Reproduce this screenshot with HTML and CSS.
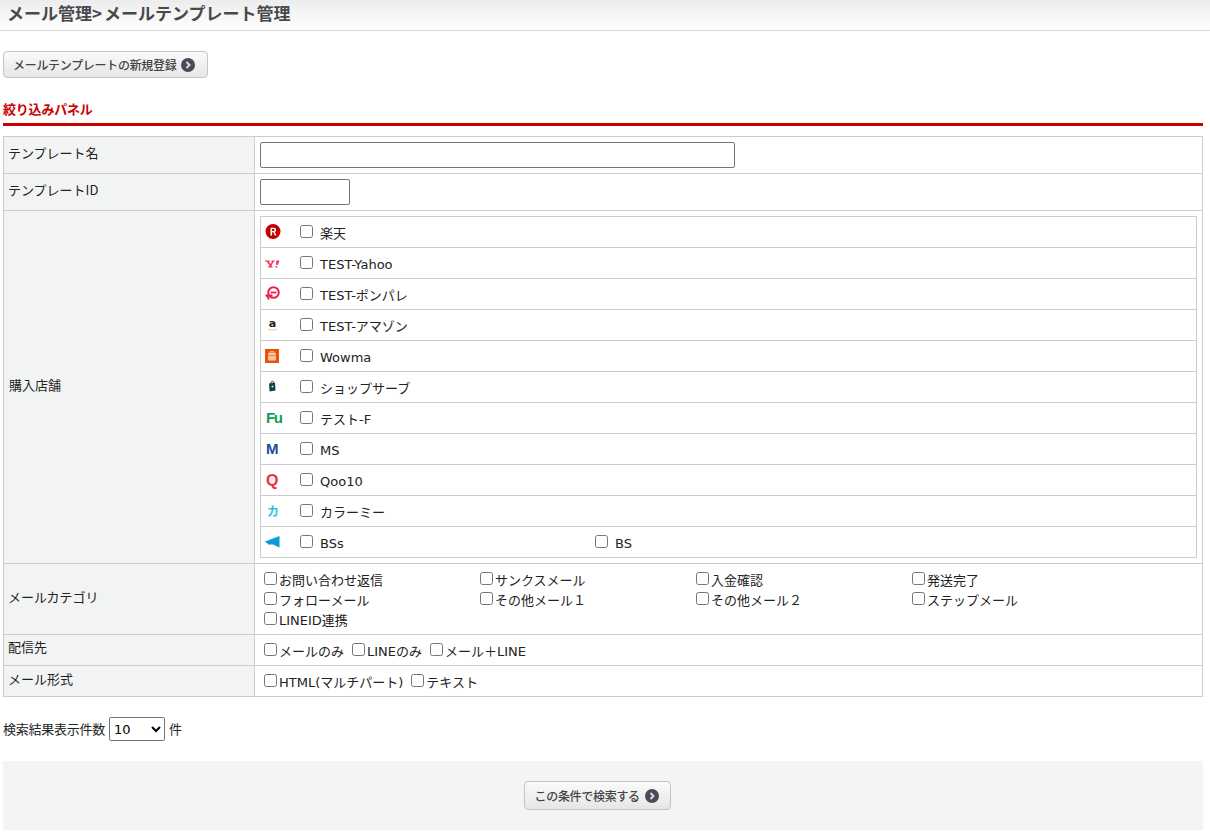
FILE: index.html
```html
<!DOCTYPE html>
<html lang="ja">
<head>
<meta charset="utf-8">
<title>メールテンプレート管理</title>
<link rel="stylesheet" href="styles.css">
</head>
<body>
<h1 class="page-title">メール管理&gt; メールテンプレート管理</h1>
<main class="content">
  <a class="btn btn-new">メールテンプレートの新規登録<svg class="arrow" viewBox="0 0 14 14"><circle cx="7" cy="7" r="7" fill="#4a4a58"/><path d="M5.5 4l3 3-3 3" fill="none" stroke="#ddd" stroke-width="2"/></svg></a>
  <h2 class="panel-title">絞り込みパネル</h2>
  <div class="form-table">
    <div class="row row-name">
      <div class="label">テンプレート名</div>
      <div class="value"><input class="text-long" type="text"></div>
    </div>
    <div class="row row-name">
      <div class="label">テンプレートID</div>
      <div class="value"><input class="text-short" type="text"></div>
    </div>
    <div class="row">
      <div class="label label-center label-shops">購入店舗</div>
      <div class="value value-shops">
        <div class="shops">
          <div class="shop"><span class="shop-icon"><svg viewBox="0 0 16 16"><circle cx="8" cy="7.500" r="7.500" fill="#bf0000"/><path fill-rule="evenodd" d="M5.500 11.500V3.800h3.200c1.500 0 2.400.8 2.400 2.200 0 1-.5 1.700-1.300 2l1.600 3.500H9.800L8.400 8.300H7.100v3.200zM7.100 5.100v2h1.400c.7 0 1-.4 1-1s-.3-1-1-1z" fill="#fff"/></svg></span><label class="shop-item"><input type="checkbox"><span>楽天</span></label></div>
          <div class="shop"><span class="shop-icon"><svg viewBox="0 0 16 16"><path d="M0 5.500h4.700v1H4L5.500 9 7 6.500h-.7v-1h3.400v1h-.8L6.700 10v1.500h1v1H3.200v-1h1.100V10L1.600 6.500H0zM11.200 5.500h3.300L12.700 10h-1.500zM10.500 11h1.700v1.500h-1.700z" fill="#f5325c"/></svg></span><label class="shop-item"><input type="checkbox"><span>TEST-Yahoo</span></label></div>
          <div class="shop"><span class="shop-icon"><svg viewBox="0 0 16 16"><circle cx="8.500" cy="6.500" r="5.300" fill="none" stroke="#e8224f" stroke-width="2"/><path d="M5.500 6.500h6" stroke="#e8224f" stroke-width="1.800"/><path d="M.5 9.500h7M2 9.500l2 4" stroke="#e8224f" stroke-width="1.800" fill="none"/></svg></span><label class="shop-item"><input type="checkbox"><span>TEST-ポンパレ</span></label></div>
          <div class="shop"><span class="shop-icon"><svg viewBox="0 0 16 16"><text x="7.500" y="10" text-anchor="middle" class="icon-a">a</text><path d="M3 12c3 1.500 6 1.500 9 0" stroke="#f2c48a" fill="none"/></svg></span><label class="shop-item"><input type="checkbox"><span>TEST-アマゾン</span></label></div>
          <div class="shop"><span class="shop-icon"><svg viewBox="0 0 16 16"><rect x="0" y="1" width="14" height="14" fill="#ea5504"/><rect x="3" y="5" width="8" height="7.500" rx="1" fill="#f6c6a8"/><path d="M5 5V3.800h4V5" fill="none" stroke="#f6c6a8"/><path d="M3 7.500h8" stroke="#ea5504" stroke-opacity=".6"/></svg></span><label class="shop-item"><input type="checkbox"><span>Wowma</span></label></div>
          <div class="shop"><span class="shop-icon"><svg viewBox="0 0 16 16"><path d="M4 4.500l6-1 .5 8-6 1z" fill="#12404a"/><path d="M6 4.500c0-3 2.500-3 2.500-.500" stroke="#12404a" fill="none"/><circle cx="7.500" cy="7.500" r="1" fill="#cfe0e0"/></svg></span><label class="shop-item"><input type="checkbox"><span>ショップサーブ</span></label></div>
          <div class="shop"><span class="shop-icon icon-fu">Fu</span><label class="shop-item"><input type="checkbox"><span>テスト-F</span></label></div>
          <div class="shop"><span class="shop-icon icon-m">M</span><label class="shop-item"><input type="checkbox"><span>MS</span></label></div>
          <div class="shop"><span class="shop-icon icon-q">Q</span><label class="shop-item"><input type="checkbox"><span>Qoo10</span></label></div>
          <div class="shop"><span class="shop-icon icon-ka">カ</span><label class="shop-item"><input type="checkbox"><span>カラーミー</span></label></div>
          <div class="shop"><span class="shop-icon"><svg viewBox="0 0 16 16"><path d="M0 7.500L14.500 2v11.500L8 10.500H3.500z" fill="#0e9bd8"/></svg></span><label class="shop-item shop-item-wide"><input type="checkbox"><span>BSs</span></label><label class="shop-item"><input type="checkbox"><span>BS</span></label></div>
        </div>
      </div>
    </div>
    <div class="row">
      <div class="label label-center label-cats">メールカテゴリ</div>
      <div class="value value-cats">
        <label class="cat"><input type="checkbox"><span>お問い合わせ返信</span></label>
        <label class="cat"><input type="checkbox"><span>サンクスメール</span></label>
        <label class="cat"><input type="checkbox"><span>入金確認</span></label>
        <label class="cat"><input type="checkbox"><span>発送完了</span></label>
        <label class="cat"><input type="checkbox"><span>フォローメール</span></label>
        <label class="cat"><input type="checkbox"><span>その他メール１</span></label>
        <label class="cat"><input type="checkbox"><span>その他メール２</span></label>
        <label class="cat"><input type="checkbox"><span>ステップメール</span></label>
        <label class="cat"><input type="checkbox"><span>LINEID連携</span></label>
      </div>
    </div>
    <div class="row row-small">
      <div class="label">配信先</div>
      <div class="value value-inline">
        <label class="cat"><input type="checkbox"><span>メールのみ</span></label>
        <label class="cat"><input type="checkbox"><span>LINEのみ</span></label>
        <label class="cat"><input type="checkbox"><span>メール＋LINE</span></label>
      </div>
    </div>
    <div class="row row-small">
      <div class="label">メール形式</div>
      <div class="value value-inline">
        <label class="cat"><input type="checkbox"><span>HTML(マルチパート)</span></label>
        <label class="cat"><input type="checkbox"><span>テキスト</span></label>
      </div>
    </div>
  </div>
  <div class="per-page"><span class="per-text">検索結果表示件数</span><select class="per-select"><option>10</option></select><span class="per-unit">件</span></div>
  <div class="search-bar">
    <a class="btn btn-search">この条件で検索する<svg class="arrow" viewBox="0 0 14 14"><circle cx="7" cy="7" r="7" fill="#4a4a58"/><path d="M5.500 4l3 3-3 3" fill="none" stroke="#ddd" stroke-width="2"/></svg></a>
  </div>
</main>
</body>
</html>
```
FILE: styles.css
```css
* { box-sizing: border-box; }
html, body { margin: 0; padding: 0; }
body {
  font-family: "DejaVu Sans", "Noto Sans CJK JP", sans-serif;
  font-size: 13px;
  color: #222;
  background: #fff;
  overflow: hidden;
  height: 832px;
}
.page-title {
  margin: 0;
  height: 31px;
  padding: 0 0 0 7px;
  font-family: "Noto Sans CJK JP", sans-serif;
  font-size: 17px;
  font-weight: 700;
  line-height: 26px;
  color: #48484f;
  background: linear-gradient(#ececec, #fff);
  border-bottom: 1px solid #d9d9de;
  word-spacing: -2px;
}
.content { padding: 20px 7px 0 3px; }
.btn {
  display: flex;
  align-items: center;
  gap: 5px;
  height: 27px;
  padding: 0 0 0 9px;
  font-family: "Noto Sans CJK JP", sans-serif;
  font-size: 12px;
  font-weight: 500;
  letter-spacing: -.3px;
  white-space: nowrap;
  color: #444;
  background: linear-gradient(#fafafa, #e6e6e6);
  border: 1px solid #c3c3cc;
  border-radius: 4px;
}
.arrow { width: 14px; height: 14px; flex: none; }
.btn-new { width: 205px; }
.panel-title {
  margin: 21px 0 10px;
  height: 27px;
  font-family: "Noto Sans CJK JP", sans-serif;
  font-size: 13px;
  font-weight: 700;
  line-height: 20px;
  letter-spacing: -.2px;
  color: #c00;
  border-bottom: 3px solid #c00;
}
.form-table {
  width: 1200px;
  border: 1px solid #ccc;
}
.row { display: flex; border-bottom: 1px solid #ccc; }
.row:last-child { border-bottom: 0; height: 30px; }
.label {
  flex: none;
  width: 251px;
  padding: 6px 4px;
  background: #f2f4f4;
  border-right: 1px solid #ccc;
  font-family: "Noto Sans CJK JP", sans-serif;
  font-size: 13px;
  line-height: 20px;
}
.label-center { display: flex; align-items: center; }
.label-shops { padding-bottom: 10px; padding-left: 5px; }
.label-cats { padding-bottom: 10px; }
.value { flex: 1; min-width: 0; padding: 5px; }
.row-name { height: 37px; }
.row-name input { height: 26px; border: 1px solid #767676; border-radius: 2px; padding: 0; display: block; }
.text-long { width: 475px; }
.text-short { width: 90px; }
.shops { border: 1px solid #ccc; }
.shop {
  display: flex;
  align-items: center;
  height: 31px;
  border-bottom: 1px solid #ccc;
  padding-left: 4px;
}
.shop:last-child { border-bottom: 0; height: 30px; }
.shop-icon {
  flex: none;
  width: 16px;
  height: 16px;
  margin-right: 19px;
  margin-top: -1px;
  font-weight: 700;
  text-align: left;
  line-height: 16px;
  white-space: nowrap;
}
.shop-icon svg { display: block; width: 16px; height: 16px; }
.icon-a { font-family: "DejaVu Sans", sans-serif; font-size: 11px; font-weight: 700; fill: #222; }
.icon-fu { color: #0f9d58; font-family: "Liberation Sans", sans-serif; font-size: 15px; letter-spacing: -1.500px; padding-left: 1px; }
.icon-m { color: #234a96; font-family: "Liberation Sans", sans-serif; font-size: 15px; padding-left: 1px; }
.icon-q { color: #ee2f4c; font-family: "Liberation Sans", sans-serif; font-size: 16px; padding-left: 1px; line-height: 18px; }
.icon-ka { color: #33bfdc; font-family: "Noto Sans CJK JP", sans-serif; font-size: 12px; padding-left: 2px; }
.shop-item { display: flex; align-items: center; }
.shop-item input { margin: -1px 7px 0 0; width: 13px; height: 13px; }
.shop-item span { line-height: 16px; margin-top: 3px; }
.shop-item-wide { width: 295px; }
.value-cats {
  display: grid;
  grid-template-columns: repeat(4, 216px);
  grid-auto-rows: 20px;
  padding: 6px 9px 4px;
}
.cat { display: inline-flex; align-items: center; line-height: 20px; white-space: nowrap; }
.cat input { margin: -3px 2px 0 0; width: 13px; height: 13px; }
.cat span { margin-top: 1px; }
.row-small { height: 31px; }
.row-small .label { padding: 2px 4px; }
.row:last-child .label { padding-top: 3px; }
.value-inline { display: flex; gap: 8px; padding: 6px 9px 4px; }
.per-page { display: flex; align-items: center; gap: 4px; margin-top: 20px; height: 24px; }
.per-text { letter-spacing: -.25px; margin-bottom: 2px; }
.per-unit { margin-bottom: 2px; }
.per-select {
  width: 56px;
  height: 24px;
  font-family: "DejaVu Sans", sans-serif;
  font-size: 13px;
  background: #fff;
  border: 1px solid #767676;
  border-radius: 2px;
}
.search-bar {
  display: flex;
  justify-content: center;
  width: 1200px;
  height: 69px;
  margin-top: 20px;
  padding: 20px 12px 0 0;
  background: #f4f4f4;
}
.btn-search { height: 29px; width: 147px; padding-left: 10px; }
```
